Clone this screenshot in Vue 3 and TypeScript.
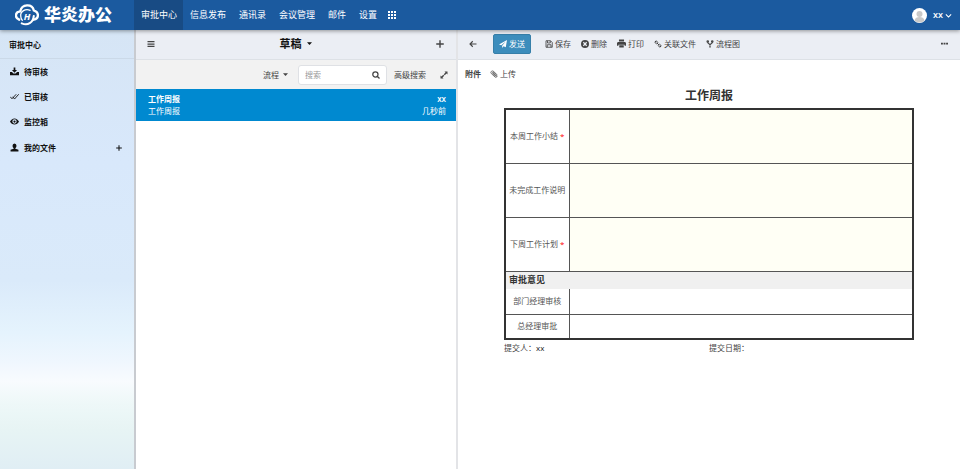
<script setup lang="ts">
import { defineComponent, h, ref } from 'vue'

interface Glyph {
  fill?: string
  line?: string
  width?: number
}

const glyphs: Record<string, Glyph> = {
  grid: { fill: 'M0 0h4v4H0zM6 0h4v4H6zM12 0h4v4h-4zM0 6h4v4H0zM6 6h4v4H6zM12 6h4v4h-4zM0 12h4v4H0zM6 12h4v4H6zM12 12h4v4h-4z' },
  chevron: { line: 'M2 5.500l6 6 6-6', width: 2.6 },
  bars: { fill: 'M1 2h14v2.500H1zM1 6.800h14v2.500H1zM1 11.600h14v2.500H1z' },
  plus: { line: 'M8 .500v15M.500 8h15', width: 2.8 },
  caret: { fill: 'M0 4h16L8 12.500z' },
  search: { line: 'M12 6.800a5.200 5.200 0 1 1-10.400 0 5.200 5.200 0 0 1 10.400 0M10.500 10.500L15 15', width: 2.5 },
  expand: { fill: 'M9 1h6v6l-2-2-3.500 3.500L7.500 6.500 11 3zM7 15H1V9l2 2 3.500-3.500 2 2L5 13z' },
  back: { line: 'M15 8H2M7.500 2.500L2 8l5.500 5.500', width: 2.2 },
  plane: { fill: 'M16 0L13.500 14.500 9 12.500 6.300 16v-4.600L13.500 3 4.500 10.600 0 8.800z' },
  save: { line: 'M2 1.500h9l3.500 3.500v9.500H2zM5 1.500v4.500h5.500V1.500M4.500 14.500V9.500H12v5', width: 1.7 },
  remove: { fill: 'M8 0a8 8 0 1 0 0 16A8 8 0 0 0 8 0M5.500 3.700L8 6.200l2.500-2.500 1.800 1.800L9.800 8l2.500 2.500-1.800 1.800L8 9.800l-2.500 2.500-1.800-1.800L6.200 8 3.700 5.500z' },
  print: { fill: 'M3.500 1h9v3.500h-9zM1.500 5.500h13L16 7v5h-2.500v-2h-11v2H0V7zM4 11h8v4H4z' },
  link: { line: 'M5.500 5.500l5 5M8 5.500L4.500 1.500 1.500 4.500 5.500 8M8 10.500l3.500 4 3-3L10.500 8', width: 2 },
  fork: { line: 'M3.500 3v2.500L8 9.500l4.500-4V3M8 9v5M2 3a1.500 1.500 0 1 0 3 0 1.500 1.500 0 1 0-3 0M11 3a1.500 1.500 0 1 0 3 0 1.500 1.500 0 1 0-3 0M6.500 14h3', width: 2.2 },
  more: { fill: 'M0 6h4.300v4H0zM5.900 6h4.300v4H5.900zM11.700 6H16v4h-4.300z' },
  clip: { line: 'M12.500 12.500L5.500 5M14 9.500L7 2.500C4 .500 0 4 2.500 7l7.500 7c2.500 2 5.500-1 3.500-3.500L7.500 4.800C6 4 4.500 5.500 5.500 7l5 4.800', width: 1.5 },
  inbox: { fill: 'M6.500 1h3v4.500h3L8 10 3.500 5.500h3zM0 9h3.500L6 11.500h4L12.500 9H16v5.500H0z' },
  checks: { line: 'M.500 8.500l3 3.500M5 8.500l3 4L15.500 4M3.500 12L11 4', width: 1.6 },
  eye: { fill: 'M8 2.500C4.500 2.500 1.500 5 0 8c1.500 3 4.500 5.500 8 5.500S14.500 11 16 8C14.500 5 11.500 2.500 8 2.500M8 4.200a3.800 3.800 0 1 1 0 7.600 3.800 3.800 0 0 1 0-7.600M8 6a2 2 0 1 0 0 4 2 2 0 0 0 0-4' },
  user: { fill: 'M8 1a4 4 0 0 0-3.500 4c0 2 .8 3.300 2 4v1L1 12v3h14v-3l-5.500-2V9c1.200-.7 2-2 2-4A4 4 0 0 0 8 1' },
}

const Icon = defineComponent({
  props: { name: { type: String, required: true } },
  setup(props) {
    return () => {
      const g = glyphs[props.name]
      return h('svg', { viewBox: '0 0 16 16', 'aria-hidden': 'true' }, [
        g.fill ? h('path', { d: g.fill, fill: 'currentColor', 'fill-rule': 'evenodd' }) : null,
        g.line
          ? h('path', { d: g.line, fill: 'none', stroke: 'currentColor', 'stroke-width': g.width })
          : null,
      ])
    }
  },
})

const apps = ['审批中心', '信息发布', '通讯录', '会议管理', '邮件', '设置']
const activeApp = ref('审批中心')

const boxes = [
  { icon: 'inbox', label: '待审核' },
  { icon: 'checks', label: '已审核' },
  { icon: 'eye', label: '监控箱' },
]

const actions = [
  { icon: 'save', label: '保存' },
  { icon: 'remove', label: '删除' },
  { icon: 'print', label: '打印' },
  { icon: 'link', label: '关联文件' },
  { icon: 'fork', label: '流程图' },
]

const fields = ref([
  { id: 'summary', label: '本周工作小结', required: true, value: '' },
  { id: 'pending', label: '未完成工作说明', required: false, value: '' },
  { id: 'plan', label: '下周工作计划', required: true, value: '' },
])

const approvals = ['部门经理审核', '总经理审批']
const keyword = ref('')
</script>

<template>
  <div class="page">
    <header class="top">
      <a class="brand" href="#">
        <svg class="brand-mark" viewBox="0 0 46 42" aria-hidden="true">
          <path d="M8 30C-1 26 0 15 10 14 13-1 33-1 36 12 47 16 46 28 36 30" stroke-width="4.500" />
          <path d="M13 37c11 5 22-1 23-14" stroke-width="4" />
          <path d="M29 12c-9-4-19 2-18 11 0 3 1 6 3 8" stroke-width="2.500" />
          <text x="23" y="30">H</text>
        </svg>
        <span class="brand-name">华炎办公</span>
      </a>
      <nav class="apps">
        <a
          v-for="app in apps"
          :key="app"
          href="#"
          class="app"
          :class="{ active: app === activeApp }"
          @click.prevent="activeApp = app"
        >{{ app }}</a>
        <button type="button" class="app all"><Icon name="grid" class="i8" /></button>
      </nav>
      <button type="button" class="account">
        <svg class="avatar" viewBox="0 0 30 30" aria-hidden="true">
          <circle cx="15" cy="15" r="15" fill="#fff" />
          <circle cx="15" cy="12" r="6" fill="#c9c9c9" />
          <path d="M5 25c1-5 5-7 10-7s9 2 10 7c-5 5-15 5-20 0" fill="#c9c9c9" />
        </svg>
        <span>xx</span>
        <Icon name="chevron" class="i7" />
      </button>
    </header>

    <div class="body">
      <aside class="side">
        <h2 class="side-title">审批中心</h2>
        <nav class="boxes">
          <a v-for="box in boxes" :key="box.label" href="#" class="box">
            <Icon :name="box.icon" class="i9" />{{ box.label }}
          </a>
          <div class="mine">
            <a href="#" class="box"><Icon name="user" class="i9" />我的文件</a>
            <button type="button" class="plain"><Icon name="plus" class="i6" /></button>
          </div>
        </nav>
      </aside>

      <section class="list">
        <div class="bar">
          <button type="button" class="plain"><Icon name="bars" class="i8" /></button>
          <button type="button" class="plain list-title">草稿<Icon name="caret" class="i5" /></button>
          <button type="button" class="plain"><Icon name="plus" class="i8" /></button>
        </div>
        <div class="filter">
          <button type="button" class="plain flow">流程<Icon name="caret" class="i5" /></button>
          <div class="search">
            <input v-model="keyword" type="text" placeholder="搜索" aria-label="搜索" />
            <Icon name="search" class="i8" />
          </div>
          <a href="#" class="advanced">高级搜索</a>
          <button type="button" class="plain"><Icon name="expand" class="i8" /></button>
        </div>
        <a href="#" class="entry">
          <span class="line"><strong>工作周报</strong><span class="who">xx</span></span>
          <span class="line"><span>工作周报</span><span>几秒前</span></span>
        </a>
      </section>

      <main class="detail">
        <div class="bar tools">
          <button type="button" class="plain back"><Icon name="back" class="i8" /></button>
          <button type="button" class="send"><Icon name="plane" class="i8" />发送</button>
          <button v-for="a in actions" :key="a.label" type="button" class="plain action">
            <Icon :name="a.icon" :class="a.icon === 'print' ? 'i9' : 'i8'" />{{ a.label }}
          </button>
          <button type="button" class="plain more"><Icon name="more" class="i7" /></button>
        </div>

        <div class="attach">
          <strong>附件</strong>
          <button type="button" class="plain upload"><Icon name="clip" class="i8" />上传</button>
        </div>

        <form class="report">
          <h1>工作周报</h1>
          <table>
            <tbody>
              <tr v-for="f in fields" :key="f.id" class="tall">
                <th scope="row">
                  <label :for="f.id">{{ f.label }}<span v-if="f.required" class="star"> *</span></label>
                </th>
                <td class="edit"><textarea :id="f.id" v-model="f.value"></textarea></td>
              </tr>
              <tr class="section">
                <th colspan="2" scope="colgroup">审批意见</th>
              </tr>
              <tr v-for="step in approvals" :key="step" class="short">
                <th scope="row">{{ step }}</th>
                <td></td>
              </tr>
            </tbody>
          </table>
          <div class="signed">
            <span>提交人：<b>xx</b></span>
            <span>提交日期：</span>
          </div>
        </form>
      </main>
    </div>
  </div>
</template>

<style>
body {
  background: #fff;
}
</style>

<style scoped>
.page {
  display: flex;
  flex-direction: column;
  min-height: 100vh;
  font-family: 'Open Sans', 'Noto Sans CJK SC', sans-serif;
  font-size: 8px;
  line-height: 12px;
  color: #444;
}

.page *,
.page {
  box-sizing: border-box;
}

a {
  color: inherit;
  text-decoration: none;
}

button,
input,
textarea {
  font: inherit;
  color: inherit;
}

.plain {
  display: flex;
  align-items: center;
  padding: 0;
  border: 0;
  background: none;
}

.i5 { width: 5px; height: 5px; }
.i6 { width: 6px; height: 6px; }
.i7 { width: 7px; height: 7px; }
.i8 { width: 8px; height: 8px; }
.i9 { width: 9px; height: 9px; }

svg {
  display: block;
  flex: none;
}

.top {
  position: relative;
  z-index: 1;
  display: flex;
  height: 30px;
  padding-right: 8px;
  background: #1b5a9f;
  box-shadow: 0 1px 4px rgba(0, 0, 0, 0.4);
  color: #fff;
}

.brand {
  display: flex;
  align-items: center;
  gap: 5px;
  width: 134px;
  padding-left: 15px;
}

.brand-mark {
  width: 24px;
  height: 22px;
}

.brand-mark path {
  fill: none;
  stroke: #fff;
  stroke-linecap: round;
}

.brand-mark text {
  fill: #fff;
  font-size: 18px;
  font-style: italic;
  font-weight: 700;
  text-anchor: middle;
}

.brand-name {
  font-size: 17px;
  font-weight: 900;
  line-height: 20px;
}

.apps {
  display: flex;
  flex: 1;
}

.app {
  display: flex;
  align-items: center;
  padding: 0 6px 0 7px;
  font-size: 9px;
}

.app.active {
  background: #184b84;
}

.all {
  padding: 0 5px;
  border: 0;
  background: none;
}

.account {
  display: flex;
  align-items: center;
  gap: 6px;
  padding: 0;
  border: 0;
  background: none;
  font-size: 9px;
  font-weight: 600;
}

.account .i7 {
  margin-left: -4px;
}

.avatar {
  width: 15px;
  height: 15px;
}

.body {
  display: flex;
  flex: 1;
}

.side {
  width: 136px;
  border-right: 2px solid #c8cbd0;
  background: linear-gradient(
    #d6e5f5 0%,
    #d8e8fb 30%,
    #daeafa 57%,
    #e5f3fd 69%,
    #f0f7fe 76%,
    #f8fbfe 80%,
    #eef8f8 85%,
    #e7f4f4 91%,
    #e0eef4 100%
  );
  color: #111;
  font-weight: 700;
}

.side-title {
  height: 29px;
  margin: 0;
  padding: 9px;
  border-bottom: 1px solid #cbd9e8;
  font-size: 8px;
}

.boxes {
  padding: 0 12px 0 10px;
}

.box {
  display: flex;
  align-items: center;
  gap: 5px;
  height: 25px;
}

.mine {
  display: flex;
  align-items: center;
  justify-content: space-between;
  margin-top: 1px;
}

.list {
  width: 322px;
  border-right: 2px solid #e3e4e7;
}

.bar {
  display: flex;
  align-items: center;
  justify-content: space-between;
  height: 30px;
  padding: 0 12px 2px 11px;
  border-bottom: 1px solid #dde1e6;
  background: #ebeef4;
}

.list-title {
  gap: 5px;
  color: #111;
  font-size: 11px;
  font-weight: 700;
}

.filter {
  display: flex;
  align-items: center;
  justify-content: flex-end;
  height: 29px;
  padding-right: 8px;
  background: #f2f2f2;
}

.flow {
  gap: 4px;
  margin-right: 10px;
}

.search {
  display: flex;
  align-items: center;
  width: 89px;
  height: 20px;
  margin-right: 7px;
  padding: 0 6px;
  border: 1px solid #dfe1e5;
  border-radius: 3px;
  background: #fff;
}

.search input {
  flex: 1;
  min-width: 0;
  padding: 0;
  border: 0;
  outline: 0;
  background: none;
}

.search input::placeholder {
  color: #999;
}

.advanced {
  margin-right: 14px;
}

.entry {
  display: block;
  padding: 4px 10px 4px 12px;
  background: #0089d0;
  color: #fff;
}

.line {
  display: flex;
  justify-content: space-between;
}

.who {
  font-weight: 600;
}

.detail {
  flex: 1;
  min-width: 0;
}

.tools {
  justify-content: flex-start;
  gap: 10px;
}

.back {
  margin-right: 6px;
}

.send {
  display: flex;
  align-items: center;
  justify-content: center;
  gap: 2px;
  width: 38px;
  height: 20px;
  margin-right: 4px;
  padding: 0;
  border: 1px solid #367fa9;
  border-radius: 2px;
  background: #3c8dbc;
  color: #fff;
}

.action {
  gap: 2px;
}

.more {
  margin-left: auto;
}

.attach {
  display: flex;
  gap: 9px;
  padding: 8px 7px 0;
}

.upload {
  gap: 2px;
}

.report {
  margin: 8px 46px 0;
}

h1 {
  margin: 0 0 4px;
  color: #333;
  font-size: 12px;
  line-height: 16px;
  text-align: center;
}

table {
  width: 100%;
  border: 2px solid #333;
  border-collapse: collapse;
  table-layout: fixed;
}

th,
td {
  padding: 0;
  border: 1px solid #555;
}

th {
  width: 64px;
  color: #555;
  font-weight: 400;
  white-space: nowrap;
}

.tall {
  height: 54px;
}

.short {
  height: 25px;
}

.edit {
  background: #fffff5;
}

.edit textarea {
  display: block;
  width: 100%;
  height: 52px;
  padding: 4px;
  border: 0;
  outline: 0;
  background: none;
  resize: none;
}

.section th {
  height: 18px;
  padding-left: 3px;
  border-bottom: 0;
  background: #f0f0f0;
  color: #333;
  font-size: 9px;
  font-weight: 700;
  text-align: left;
}

.section + .short th,
.section + .short td {
  border-top: 0;
}

.star {
  color: #f00;
}

.signed {
  display: grid;
  grid-template-columns: 1fr 1fr;
  padding-top: 2px;
}

.signed b {
  color: #222;
  font-weight: 400;
}
</style>
